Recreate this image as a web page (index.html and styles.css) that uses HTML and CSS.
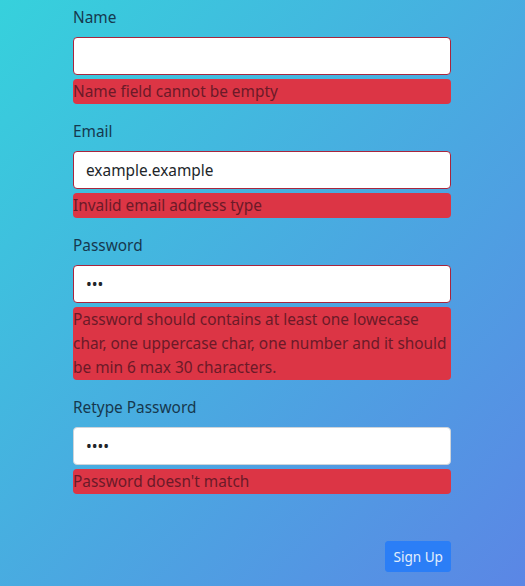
FILE: index.html
```html
<!DOCTYPE html>
<html>
<head>
<meta charset="utf-8">
<link rel="stylesheet" href="styles.css">
</head>
<body>
<form class="form">
  <div class="group">
    <label class="label">Name</label>
    <input class="control invalid" type="text" value="">
    <div class="error">Name field cannot be empty</div>
  </div>
  <div class="group">
    <label class="label">Email</label>
    <input class="control invalid" type="text" value="example.example">
    <div class="error">Invalid email address type</div>
  </div>
  <div class="group">
    <label class="label">Password</label>
    <input class="control invalid" type="password" value="abc">
    <div class="error">Password should contains at least one lowecase char, one uppercase char, one number and it should be min 6 max 30 characters.</div>
  </div>
  <div class="group">
    <label class="label">Retype Password</label>
    <input class="control" type="password" value="abcd">
    <div class="error">Password doesn't match</div>
  </div>
  <div class="actions">
    <button class="btn" type="button">Sign Up</button>
  </div>
</form>
</body>
</html>
```
FILE: styles.css
```css
html, body {
  margin: 0;
  padding: 0;
  height: 100%;
}
body {
  background: linear-gradient(to bottom right, #36d1dc, #5b86e5);
  font-family: "Noto Sans", sans-serif;
  font-size: 15.4px;
  line-height: 24px;
  color: #15394f;
  overflow: hidden;
}
.form {
  width: 378px;
  margin: 0 0 0 73px;
  padding-top: 5px;
  display: flex;
  flex-direction: column;
}
.group {
  display: flex;
  flex-direction: column;
  margin-bottom: 15px;
}
.label {
  display: block;
  padding-top: 1px;
  margin-bottom: 7px;
  color: #16384e;
}
.control {
  box-sizing: border-box;
  height: 38px;
  padding: 6px 12px;
  font-family: inherit;
  font-size: 15.4px;
  color: #212529;
  background: #fff;
  border: 1px solid #ced4da;
  border-radius: 4px;
  outline: none;
}
.control.invalid {
  border-color: #a8253d;
}
.error {
  margin-top: 4px;
  padding-top: 1px;
  background: #dc3545;
  color: #6b1a28;
  border-radius: 4px;
}
.actions {
  display: flex;
  justify-content: flex-end;
  margin-top: 32px;
}
.btn {
  height: 31px;
  padding: 4px 7px;
  font-family: inherit;
  font-size: 13.6px;
  line-height: 21px;
  color: #e3eefc;
  background: #2b7ef6;
  border: 1px solid #2b7ef6;
  border-radius: 3px;
}
```
